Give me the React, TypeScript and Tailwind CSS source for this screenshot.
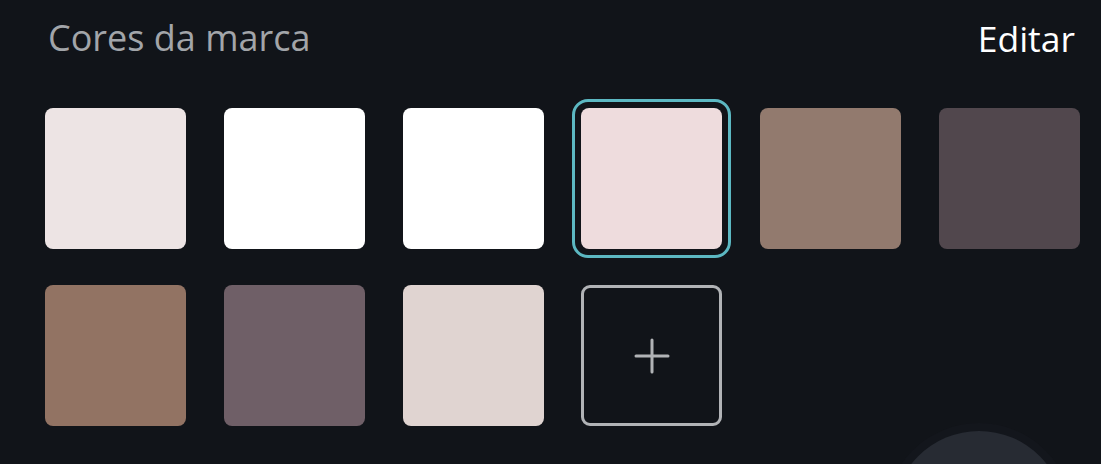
import React from 'react';

const swatches: string[] = [
  '#ede4e4',
  '#ffffff',
  '#ffffff',
  '#eedcdd',
  '#927a6e',
  '#51474d',
  '#927363',
  '#6f5f67',
  '#e0d4d1',
];

const SELECTED = 3;

const App: React.FC = () => {
  return (
    <div
      className="relative h-[464px] w-[1101px] overflow-hidden bg-[#111419]"
      style={{ fontFamily: '"Open Sans", "Noto Sans", sans-serif' }}
    >
      <div className="flex items-start justify-between pl-[48px] pr-[26px] pt-[14px]">
        <h2 className="text-[36px] leading-[48px] font-normal text-[#a2a5a9]">Cores da marca</h2>
        <button className="text-[35.5px] leading-[48px] text-white">Editar</button>
      </div>

      <div className="mt-[46px] grid grid-cols-[repeat(6,141px)] justify-between gap-y-[36px] pl-[45px] pr-[21px]">
        {swatches.map((color, i) => (
          <div key={i} className="relative h-[141px] w-[141px]">
            {i === SELECTED && (
              <div className="absolute -inset-[9px] rounded-[16px] border-[3px] border-[#5cb8c2]" />
            )}
            <div className="relative h-full w-full rounded-[8px]" style={{ backgroundColor: color }} />
          </div>
        ))}
        <button className="flex h-[141px] w-[141px] items-center justify-center rounded-[9px] border-[3px] border-[#b1b3b6]">
          <svg width="36" height="36" viewBox="0 0 36 36" fill="none">
            <path d="M18 2v32M2 18h32" stroke="#b1b3b6" strokeWidth="3" strokeLinecap="round" />
          </svg>
        </button>
      </div>

      <div className="absolute left-[893px] top-[431px] h-[172px] w-[172px] rounded-full bg-[#272b33] shadow-[0_0_0_8px_rgba(20,23,29,0.8)]" />
    </div>
  );
};

export default App;
